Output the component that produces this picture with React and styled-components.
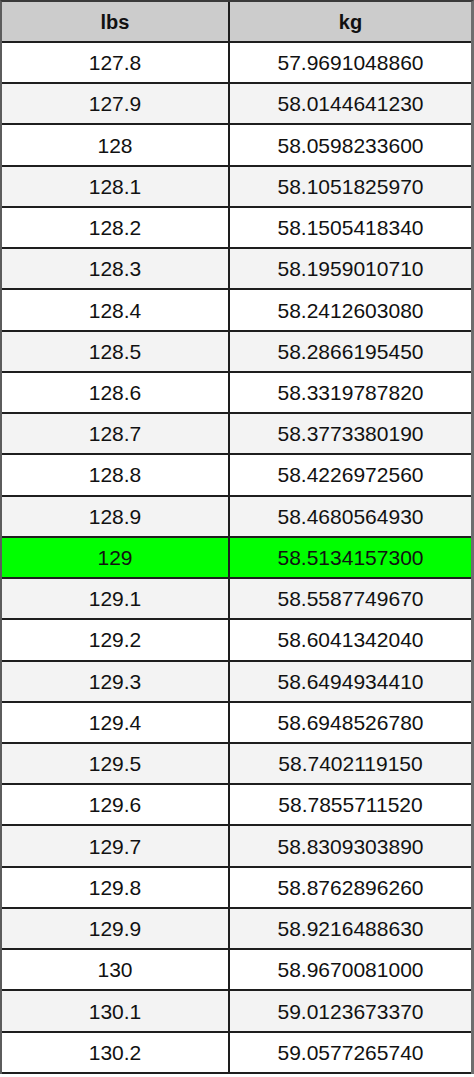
import React from "react";
import styled, { createGlobalStyle } from "styled-components";

const rows = [
  ["127.8", "57.9691048860"],
  ["127.9", "58.0144641230"],
  ["128", "58.0598233600"],
  ["128.1", "58.1051825970"],
  ["128.2", "58.1505418340"],
  ["128.3", "58.1959010710"],
  ["128.4", "58.2412603080"],
  ["128.5", "58.2866195450"],
  ["128.6", "58.3319787820"],
  ["128.7", "58.3773380190"],
  ["128.8", "58.4226972560"],
  ["128.9", "58.4680564930"],
  ["129", "58.5134157300"],
  ["129.1", "58.5587749670"],
  ["129.2", "58.6041342040"],
  ["129.3", "58.6494934410"],
  ["129.4", "58.6948526780"],
  ["129.5", "58.7402119150"],
  ["129.6", "58.7855711520"],
  ["129.7", "58.8309303890"],
  ["129.8", "58.8762896260"],
  ["129.9", "58.9216488630"],
  ["130", "58.9670081000"],
  ["130.1", "59.0123673370"],
  ["130.2", "59.0577265740"],
];

const GlobalStyle = createGlobalStyle`
  body {
    margin: 0;
    background: #fff;
    font-family: "Liberation Sans", Arial, sans-serif;
  }
`;

const Table = styled.div`
  width: 474px;
  box-sizing: border-box;
  border-top: 2px solid #3a3a3a;
  border-left: 2px solid #5c5c5c;
  border-right: 3px solid #6e6e6e;
`;

const Row = styled.div`
  display: grid;
  grid-template-columns: 228px 1fr;
  height: ${(p) => (p.$header ? "39px" : "39.24px")};
  border-bottom: 2px solid #1e1e1e;
  background: ${(p) =>
    p.$header ? "#cccccc" : p.$active ? "#00ff00" : p.$shade ? "#f3f3f3" : "#ffffff"};
`;

const Cell = styled.div`
  display: flex;
  align-items: center;
  justify-content: center;
  font-size: ${(p) => (p.$header ? "20px" : "21px")};
  font-weight: ${(p) => (p.$header ? 700 : 400)};
  color: #111;
  padding-top: 1px;
  &:first-child {
    border-right: 2px solid #1e1e1e;
  }
`;

export default function App() {
  return (
    <>
      <GlobalStyle />
      <Table>
        <Row $header>
          <Cell $header>lbs</Cell>
          <Cell $header>kg</Cell>
        </Row>
        {rows.map(([lbs, kg], i) => (
          <Row key={lbs} $shade={i % 2 === 1} $active={lbs === "129"}>
            <Cell>{lbs}</Cell>
            <Cell>{kg}</Cell>
          </Row>
        ))}
      </Table>
    </>
  );
}
